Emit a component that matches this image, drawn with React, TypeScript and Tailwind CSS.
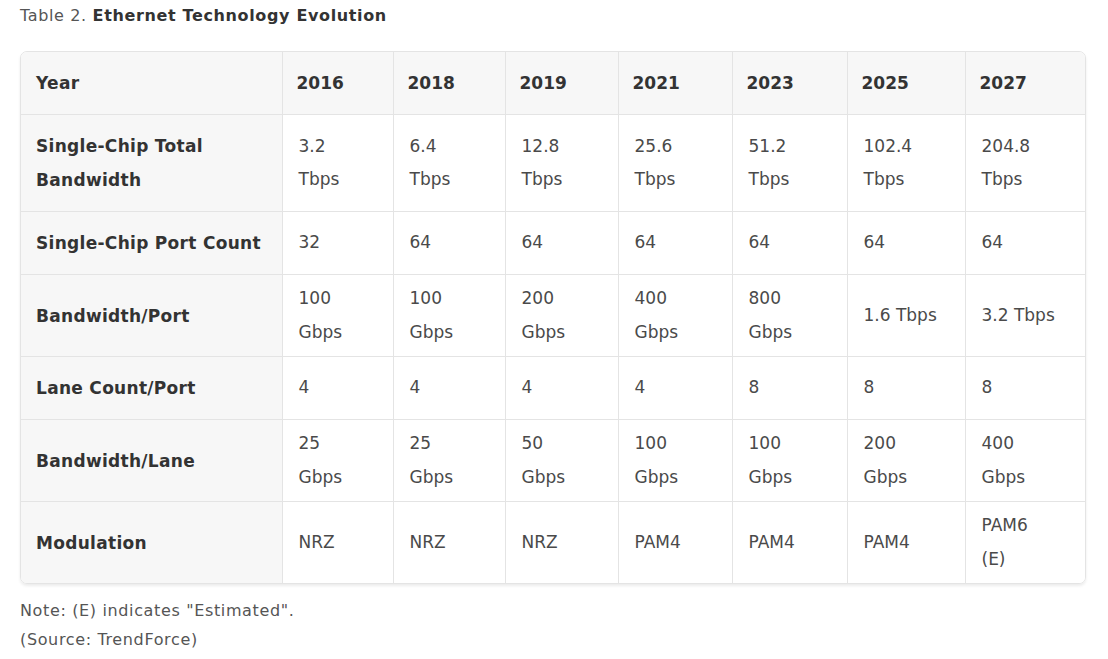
const years = ['2016', '2018', '2019', '2021', '2023', '2025', '2027'];

const rows: { label: string[]; cells: string[][] }[] = [
  {
    label: ['Single-Chip Total', 'Bandwidth'],
    cells: [
      ['3.2', 'Tbps'],
      ['6.4', 'Tbps'],
      ['12.8', 'Tbps'],
      ['25.6', 'Tbps'],
      ['51.2', 'Tbps'],
      ['102.4', 'Tbps'],
      ['204.8', 'Tbps'],
    ],
  },
  {
    label: ['Single-Chip Port Count'],
    cells: [['32'], ['64'], ['64'], ['64'], ['64'], ['64'], ['64']],
  },
  {
    label: ['Bandwidth/Port'],
    cells: [
      ['100', 'Gbps'],
      ['100', 'Gbps'],
      ['200', 'Gbps'],
      ['400', 'Gbps'],
      ['800', 'Gbps'],
      ['1.6 Tbps'],
      ['3.2 Tbps'],
    ],
  },
  {
    label: ['Lane Count/Port'],
    cells: [['4'], ['4'], ['4'], ['4'], ['8'], ['8'], ['8']],
  },
  {
    label: ['Bandwidth/Lane'],
    cells: [
      ['25', 'Gbps'],
      ['25', 'Gbps'],
      ['50', 'Gbps'],
      ['100', 'Gbps'],
      ['100', 'Gbps'],
      ['200', 'Gbps'],
      ['400', 'Gbps'],
    ],
  },
  {
    label: ['Modulation'],
    cells: [['NRZ'], ['NRZ'], ['NRZ'], ['PAM4'], ['PAM4'], ['PAM4'], ['PAM6', '(E)']],
  },
];

const colWidths = ['w-[261px]', 'w-[111px]', 'w-[112px]', 'w-[113px]', 'w-[114px]', 'w-[115px]', 'w-[118px]', 'w-[120px]'];

function Lines({ parts }: { parts: string[] }) {
  return (
    <>
      {parts.map((p, i) => (
        <div key={i}>{p}</div>
      ))}
    </>
  );
}

export default function App() {
  return (
    <div className="w-[1108px] h-[659px] bg-white px-5 pt-[5px] font-['DejaVu_Sans',sans-serif] text-[#4a4a4a]">
      <p className="text-[16px] leading-[22px] tracking-[0.04em] text-[#555]">
        Table 2. <span className="font-bold text-[#333]">Ethernet Technology Evolution</span>
      </p>

      <div className="mt-6 w-[1066px] border border-[#e4e4e4] rounded-[7px] overflow-hidden shadow-[0_2px_3px_rgba(0,0,0,0.08)]">
        <table className="table-fixed border-collapse w-[1064px] text-[17px] leading-[34px]">
          <colgroup>
            {colWidths.map((w, i) => (
              <col key={i} className={w} />
            ))}
          </colgroup>
          <thead>
            <tr className="bg-[#f7f7f7]">
              <th className="text-left font-bold text-[#333] pl-[15px] py-[14px] tracking-[0.3px] align-middle">Year</th>
              {years.map((y) => (
                <th key={y} className="text-left font-bold text-[#333] pl-[14px] py-[14px] border-l border-[#e4e4e4] align-middle">
                  {y}
                </th>
              ))}
            </tr>
          </thead>
          <tbody>
            {rows.map((r, ri) => (
              <tr key={ri} className="border-t border-[#e4e4e4]">
                <td className="bg-[#f7f7f7] font-bold text-[#333] pl-[15px] py-[14px] tracking-[0.3px] align-middle">
                  <Lines parts={r.label} />
                </td>
                {r.cells.map((c, ci) => (
                  <td key={ci} className="bg-white pl-[16px] pr-1 py-[7px] leading-[33.5px] border-l border-[#e4e4e4] align-middle">
                    <Lines parts={c} />
                  </td>
                ))}
              </tr>
            ))}
          </tbody>
        </table>
      </div>

      <div className="mt-[12px] text-[16px] leading-[29px] tracking-[0.04em] text-[#555]">
        <p>Note: (E) indicates "Estimated".</p>
        <p>(Source: TrendForce)</p>
      </div>
    </div>
  );
}
